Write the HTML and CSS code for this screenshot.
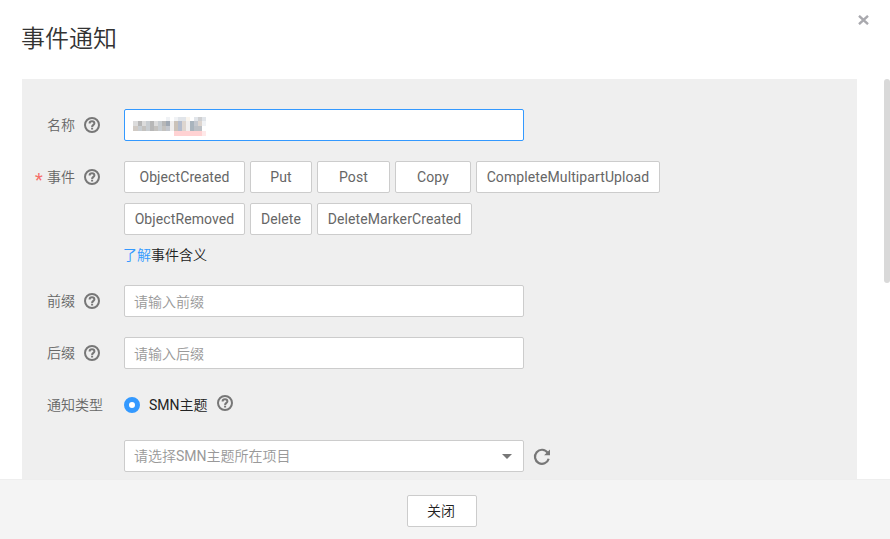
FILE: index.html
```html
<!DOCTYPE html>
<html lang="zh-CN">
<head>
<meta charset="utf-8">
<title>事件通知</title>
<link rel="stylesheet" href="styles.css">
</head>
<body>
<svg class="defs" width="0" height="0" aria-hidden="true">
  <symbol id="help" viewBox="0 0 16 16">
    <circle cx="8" cy="8" r="7" fill="none" stroke="currentColor" stroke-width="2"/>
    <path d="M5.6 6.5C5.6 5.1 6.7 4.3 8 4.3S10.4 5.1 10.4 6.4C10.4 7.8 8.1 8 8.1 9.9" fill="none" stroke="currentColor" stroke-width="2"/>
    <rect x="7.1" y="10.7" width="2" height="1.8" fill="currentColor"/>
  </symbol>
</svg>
<div class="dialog">
  <header class="header">
    <h1 class="title">事件通知</h1>
    <svg class="close" viewBox="0 0 11 10"><path d="M1 .8L10 9.2M10 .8L1 9.2" stroke="#a9a9ae" stroke-width="2.4"/></svg>
  </header>
  <main class="body">
    <form class="panel">
      <div class="row name-row">
        <div class="label">名称<svg class="help"><use href="#help"/></svg></div>
        <div class="field focused">
          <svg class="masked" width="73" height="19" viewBox="0 0 73 19" shape-rendering="crispEdges">
            <path fill="#f0f2f5" d="M33 0h4v4h-4zM41 0h4v4h-4zM69 4h4v5h-4z"/>
            <path fill="#e1e5ea" d="M45 0h8v4h-8zM61 0h4v4h-4zM69 0h4v4h-4z"/>
            <path fill="#faf5ee" d="M53 0h4v4h-4z"/>
            <path fill="#cfd0d2" d="M65 0h4v4h-4z"/>
            <path fill="#dcdcdc" d="M0 4h5v5h-5zM9 4h4v5h-4zM21 4h4v5h-4z"/>
            <path fill="#d0cac4" d="M0 9h5v5h-5z"/>
            <path fill="#b7b7b7" d="M5 4h4v5h-4zM17 4h4v5h-4zM29 4h4v5h-4zM17 9h4v5h-4z"/>
            <path fill="#c8cdd1" d="M13 4h4v5h-4zM25 4h4v5h-4zM5 9h4v5h-4zM13 9h4v5h-4zM25 9h4v5h-4z"/>
            <path fill="#c4c2bf" d="M9 9h4v5h-4zM21 9h4v5h-4zM29 9h4v5h-4z"/>
            <path fill="#9fa8b3" d="M33 4h4v5h-4z"/>
            <path fill="#c3c7ce" d="M33 9h4v5h-4zM61 4h4v5h-4z"/>
            <path fill="#f0eeee" d="M37 4h4v10h-4zM53 4h4v10h-4z"/>
            <path fill="#cbc2b9" d="M41 4h4v5h-4zM41 9h4v5h-4z"/>
            <path fill="#b4bccd" d="M45 4h4v10h-4z"/>
            <path fill="#a9b4bd" d="M57 4h4v10h-4z"/>
            <path fill="#ddd5cf" d="M49 4h4v10h-4zM65 4h4v5h-4z"/>
            <path fill="#bcc0c5" d="M61 9h8v5h-8z"/>
            <path fill="#ffd2d3" d="M41 14h28v5h-28z"/>
            <path fill="#ffe9e9" d="M69 14h4v5h-4z"/>
          </svg>
        </div>
      </div>
      <div class="row event-row">
        <div class="label"><span class="required"></span>事件<svg class="help"><use href="#help"/></svg></div>
        <div class="events">
          <div class="line">
            <button type="button" class="w121">ObjectCreated</button><button type="button" class="w62">Put</button><button type="button" class="w73">Post</button><button type="button" class="w76">Copy</button><button type="button" class="w184">CompleteMultipartUpload</button>
          </div>
          <div class="line">
            <button type="button" class="w121">ObjectRemoved</button><button type="button" class="w62">Delete</button><button type="button" class="w155">DeleteMarkerCreated</button>
          </div>
          <p class="hint"><a>了解</a>事件含义</p>
        </div>
      </div>
      <div class="row">
        <div class="label">前缀<svg class="help"><use href="#help"/></svg></div>
        <div class="field">请输入前缀</div>
      </div>
      <div class="row">
        <div class="label">后缀<svg class="help"><use href="#help"/></svg></div>
        <div class="field">请输入后缀</div>
      </div>
      <div class="row type-row">
        <div class="label">通知类型</div>
        <span class="radio"></span><span class="radio-text"><span class="latin">SMN</span>主题</span><svg class="help type-help"><use href="#help"/></svg>
      </div>
      <div class="row">
        <div class="label"></div>
        <div class="field select"><span>请选择<span class="latin">SMN</span>主题所在项目</span><i class="caret"></i></div>
        <svg class="refresh" viewBox="0 0 18 18"><path d="M14.6 4.6A7 7 0 1 0 15.7 10.7" fill="none" stroke="currentColor" stroke-width="2.2"/><path d="M17 1.4V7.3H11.1Z" fill="currentColor"/></svg>
      </div>
    </form>
    <div class="scrollbar"></div>
  </main>
  <footer class="footer"><button type="button" class="dismiss">关闭</button></footer>
</div>
</body>
</html>
```

FILE: styles.css
```css
* { box-sizing: border-box; }
body {
  margin: 0;
  overflow: hidden;
  background: #fff;
  color: #252b3a;
  font: 14px/20px Roboto, "Noto Sans CJK SC", sans-serif;
  font-weight: 350;
}
.defs { position: absolute; }
.latin { font-weight: 400; }
.dialog { display: flex; flex-direction: column; height: 539px; }
.header { display: flex; justify-content: space-between; height: 79px; padding: 15px 21px 0; }
.title { margin: 6px 0 0; font-size: 24px; line-height: 36px; font-weight: 350; color: #333; }
.close { width: 11px; height: 10px; }
.body { display: flex; justify-content: space-between; height: 400px; overflow: hidden; padding-left: 22px; }
.panel { width: 835px; height: 420px; padding: 30px 0 0 25px; background: #efefef; }
.scrollbar { width: 6px; height: 204px; border-radius: 3px; background: #d9d9d9; }
.row { display: flex; margin-bottom: 20px; }
.label { display: flex; align-items: center; width: 77px; height: 32px; color: #666; position: relative; }
.help { width: 16px; height: 16px; margin-left: 9px; color: #777; }
.required { position: absolute; left: -12px; top: 9px; color: #f66f6a; font-size: 18px; line-height: 20px; font-weight: 400; }
.required::before { content: "*"; }
.field {
  display: flex;
  align-items: center;
  width: 400px;
  height: 32px;
  padding: 1px 10px 0 9px;
  border: 1px solid #ccc;
  border-radius: 2px;
  background: #fff;
  color: #999;
}
.focused { padding: 1px 8px 0; border-color: #3399ff; }
.masked { margin-top: 1px; }
.line { display: flex; gap: 5px; margin-bottom: 10px; }
button {
  height: 32px;
  padding: 0;
  border: 1px solid #ccc;
  border-radius: 2px;
  background: #fff;
  color: #666;
  font: 14px/20px Roboto, "Noto Sans CJK SC", sans-serif;
  letter-spacing: .1px;
}
.w62 { width: 62px; }
.w73 { width: 73px; }
.w76 { width: 76px; }
.w121 { width: 121px; }
.w155 { width: 155px; }
.w184 { width: 184px; }
.hint { margin: 0 0 0 -1px; color: #222; }
.hint a { color: #3399ff; }
.type-row { align-items: center; margin-bottom: 19px; }
.radio { width: 16px; height: 16px; border: 5px solid #3399ff; border-radius: 50%; background: #fff; }
.radio-text { margin-left: 9px; color: #222; }
.type-help { margin-bottom: 4px; }
.select { justify-content: space-between; padding-top: 0; padding-bottom: 1px; }
.caret { border: 5px solid transparent; border-top-color: #777; border-bottom: 0; margin: 1px 1px 0 0; }
.refresh { width: 18px; height: 18px; margin: 8px 0 0 9px; color: #777; }
.footer { display: flex; justify-content: center; height: 60px; padding-top: 15px; border-top: 1px solid #eee; background: #f4f4f4; }
.dismiss { width: 70px; margin-right: 6px; padding-right: 2px; color: #222; font-weight: 350; letter-spacing: 0; }
```
